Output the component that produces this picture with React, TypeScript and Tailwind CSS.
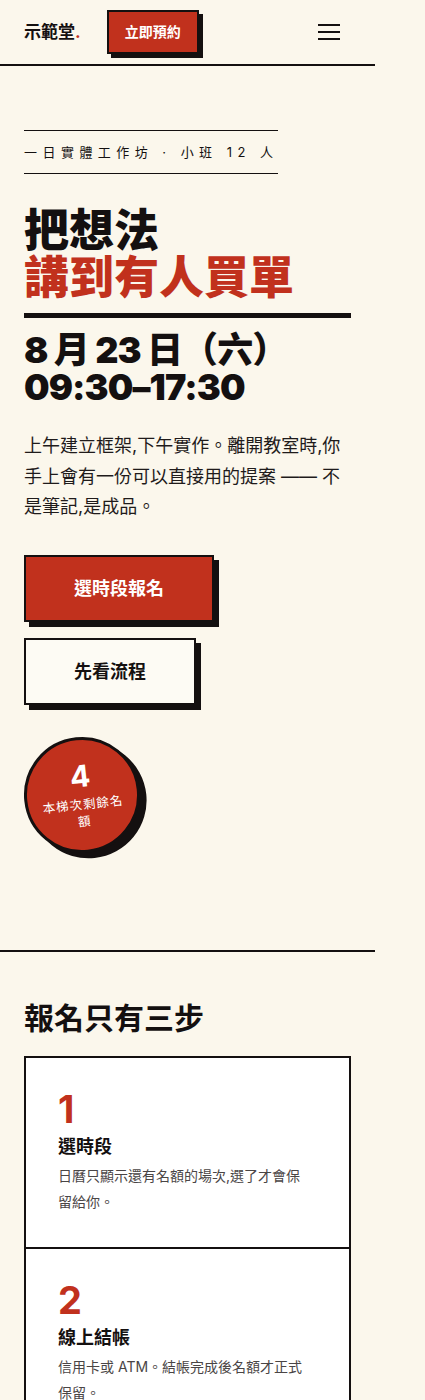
import React from 'react';

const steps = [
  { n: '1', title: '選時段', desc: '日曆只顯示還有名額的場次,選了才會保留給你。' },
  { n: '2', title: '線上結帳', desc: '信用卡或 ATM。結帳完成後名額才正式保留。' },
  { n: '3', title: '收到確認信', desc: '行前通知與上課地點會在開課前三天寄出。' },
];

export default function App() {
  return (
    <div className="min-h-screen bg-[#fbf7ec] text-[#141010] font-['Inter','Noto_Sans_CJK_TC',sans-serif]">
      <div className="w-[375px]">
        <header className="flex items-center h-[66px] px-6 border-b-2 border-[#141010]">
          <div className="text-[17px] font-bold leading-none">
            示範堂<span className="text-[#c1311d]">.</span>
          </div>
          <button className="ml-[26px] px-4 py-[10px] text-[14px] leading-5 font-bold text-white bg-[#c1311d] border-2 border-[#141010] shadow-[4px_4px_0_#141010]">
            立即預約
          </button>
          <button className="ml-auto w-11 h-11 flex flex-col items-center justify-center gap-[5px]">
            <span className="block w-[22px] h-[2px] bg-[#141010]" />
            <span className="block w-[22px] h-[2px] bg-[#141010]" />
            <span className="block w-[22px] h-[2px] bg-[#141010]" />
          </button>
        </header>

        <section className="px-6 pt-16 pb-[97px]">
          <div className="inline-block border-y border-[#141010] py-3 text-[13px] leading-[18px] tracking-[0.42em]">
            一日實體工作坊 · 小班 12 人
          </div>

          <h1 className="mt-[33px] text-[45px] leading-[47px] font-black">
            把想法
            <br />
            <span className="text-[#c1311d]">講到有人買單</span>
          </h1>

          <div className="mt-3 h-[5px] bg-[#141010]" />

          <div className="mt-[14px] text-[36px] leading-[37px] font-black tracking-tight">
            8 月 23 日（六）
            <br />
            09:30–17:30
          </div>

          <p className="mt-[25px] text-[18px] leading-[1.7] text-[#1f1b1b]">
            上午建立框架,下午實作。離開教室時,你手上會有一份可以直接用的提案 —— 不是筆記,是成品。
          </p>

          <div className="mt-8 flex flex-col items-start gap-4">
            <button className="px-12 py-[18px] text-[18px] leading-[27px] font-bold text-white bg-[#c1311d] border-2 border-[#141010] shadow-[5px_5px_0_#141010]">
              選時段報名
            </button>
            <button className="px-12 py-[18px] text-[18px] leading-[27px] font-bold bg-[#fdfbf4] border-2 border-[#141010] shadow-[5px_5px_0_#141010]">
              先看流程
            </button>
          </div>

          <div className="mt-8 w-[116px] h-[116px] rounded-full bg-[#c1311d] border-[3px] border-[#141010] shadow-[6px_6px_0_#141010] -rotate-6 flex flex-col items-center justify-center px-3 text-white text-center">
            <div className="text-[30px] leading-8 font-bold">4</div>
            <div className="mt-1 text-[12.5px] leading-[17px] tracking-[1px]">本梯次剩餘名額</div>
          </div>
        </section>

        <section className="border-t-2 border-[#141010] px-6 pt-12 pb-16">
          <h2 className="text-[30px] leading-9 font-bold">報名只有三步</h2>
          <div className="mt-5 border-2 border-[#141010] bg-white">
            {steps.map((s, i) => (
              <div key={s.n} className={`p-8 ${i > 0 ? 'border-t-2 border-[#141010]' : ''}`}>
                <div className="text-[38px] leading-none font-bold text-[#c1311d]">{s.n}</div>
                <div className="mt-[6px] text-[18px] leading-[25px] font-bold">{s.title}</div>
                <p className="mt-1 max-w-[250px] text-[14px] leading-[26px] text-[#4a4545]">{s.desc}</p>
              </div>
            ))}
          </div>
        </section>
      </div>
    </div>
  );
}
